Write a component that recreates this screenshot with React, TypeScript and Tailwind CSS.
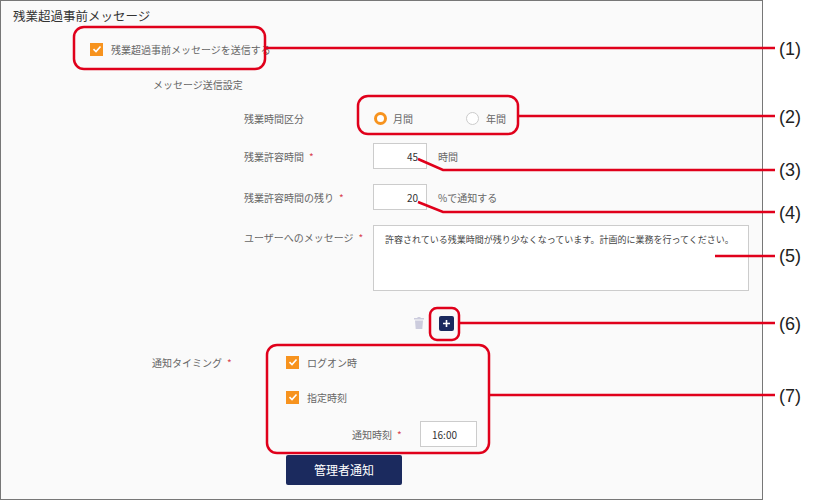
export default function App() {
  const font = { fontFamily: '"Noto Sans CJK JP", "Liberation Sans", sans-serif' };
  const Check = () => (
    <span className="inline-flex w-[13px] h-[13px] bg-[#f7931e] items-center justify-center shrink-0">
      <svg width="10" height="10" viewBox="0 0 10 10"><path d="M1.5 5.2 L4 7.5 L8.5 2.5" stroke="#fff" strokeWidth="1.6" fill="none" /></svg>
    </span>
  );
  const Star = () => <span className="text-[#d9434f] ml-[5px]">*</span>;
  return (
    <div className="relative w-[818px] h-[502px] bg-white text-[10px] text-[#666]" style={font}>
      <div className="w-[763px] h-[500px] border border-[#777] bg-[#fafafa] flex flex-col">
        <div className="text-[12.5px] text-[#333] pl-[12px] pt-[6px] h-[30px]">残業超過事前メッセージ</div>
        <div className="flex items-center gap-[8px] pl-[89px] h-[36px]"><Check /><span>残業超過事前メッセージを送信する</span></div>
        <div className="pl-[152px] h-[36px] pt-[10px]">メッセージ送信設定</div>
        <div className="flex items-center h-[30px] pl-[243px]">
          <span className="w-[130px]">残業時間区分</span>
          <span className="w-[13px] h-[13px] rounded-full border-[3px] border-[#f7931e] bg-white" />
          <span className="ml-[6px] w-[73px]">月間</span>
          <span className="w-[13px] h-[13px] rounded-full border border-[#ccc] bg-white" />
          <span className="ml-[7px]">年間</span>
        </div>
        <div className="flex items-center h-[42px] pl-[243px] pt-[4px]">
          <span className="w-[129px]">残業許容時間<Star /></span>
          <span className="w-[54px] h-[26px] border border-[#ccc] bg-white flex items-center justify-end pr-[8px] text-[#333]">45</span>
          <span className="ml-[11px]">時間</span>
        </div>
        <div className="flex items-center h-[42px] pl-[243px] pt-[2px]">
          <span className="w-[129px]">残業許容時間の残り<Star /></span>
          <span className="w-[54px] h-[26px] border border-[#ccc] bg-white flex items-center justify-end pr-[8px] text-[#333]">20</span>
          <span className="ml-[11px]">%で通知する</span>
        </div>
        <div className="flex items-start h-[84px] pl-[243px] pt-[8px]">
          <span className="w-[129px] pt-[5px]">ユーザーへのメッセージ<Star /></span>
          <div className="w-[376px] h-[66px] border border-[#ccc] bg-white px-[11px] pt-[7px] text-[#444] text-[9px] whitespace-nowrap">許容されている残業時間が残り少なくなっています。計画的に業務を行ってください。</div>
        </div>
        <div className="flex items-center h-[34px] pl-[410px] gap-[13px] pt-[10px]">
          <span className="w-[15px] h-[15px] flex items-center justify-center">
            <svg width="10" height="12" viewBox="0 0 10 12"><rect x="0" y="1" width="10" height="1.5" fill="#ccd" /><rect x="3.5" y="0" width="3" height="1.5" fill="#ccd" /><path d="M1 3.5 H9 L8.3 12 H1.7Z" fill="#ccd" /></svg>
          </span>
          <span className="w-[15px] h-[15px] bg-[#1b2a5e] rounded-[2px] flex items-center justify-center">
            <svg width="9" height="9" viewBox="0 0 9 9"><path d="M4.5 1 V8 M1 4.5 H8" stroke="#fff" strokeWidth="1.6" /></svg>
          </span>
        </div>
        <div className="flex h-[118px] pt-[20px]">
          <span className="pl-[151px] w-[285px]">通知タイミング<Star /></span>
          <div className="flex flex-col">
            <div className="flex items-center gap-[8px] h-[14px]"><Check /><span>ログオン時</span></div>
            <div className="flex items-center gap-[8px] h-[14px] mt-[21px]"><Check /><span>指定時刻</span></div>
            <div className="flex items-center mt-[17px] pl-[66px]">
              <span className="w-[68px]">通知時刻<Star /></span>
              <span className="w-[57px] h-[26px] border border-[#ccc] bg-white flex items-center pl-[11px] text-[#333]">16:00</span>
            </div>
          </div>
        </div>
        <div className="pl-[285px] pt-[2px]">
          <div className="w-[116px] h-[30px] bg-[#1b2a5e] rounded-[2px] text-white text-[12px] flex items-center justify-center">管理者通知</div>
        </div>
      </div>
      <svg className="absolute inset-0 pointer-events-none" width="818" height="502" fill="none" stroke="#e0001b" strokeWidth="2.5">
        <rect x="74" y="27" width="191" height="42" rx="10" />
        <path d="M265 48 H775" />
        <rect x="358" y="96" width="160" height="38" rx="10" />
        <path d="M518 116 H775" />
        <path d="M418 159 L443 170 H775" />
        <path d="M418 202 L443 212 H775" />
        <path d="M715 256 H775" />
        <rect x="430" y="308" width="29" height="32" rx="7" />
        <path d="M459 323 H775" />
        <rect x="267" y="345" width="222" height="108" rx="10" />
        <path d="M489 395 H775" />
      </svg>
      <div className="absolute left-[779px] top-0 text-[18px] text-[#222]" style={{ fontFamily: '"Liberation Sans", sans-serif' }}>
        <span className="absolute top-[36px]">(1)</span>
        <span className="absolute top-[104px]">(2)</span>
        <span className="absolute top-[157px]">(3)</span>
        <span className="absolute top-[200px]">(4)</span>
        <span className="absolute top-[243px]">(5)</span>
        <span className="absolute top-[311px]">(6)</span>
        <span className="absolute top-[383px]">(7)</span>
      </div>
    </div>
  );
}
